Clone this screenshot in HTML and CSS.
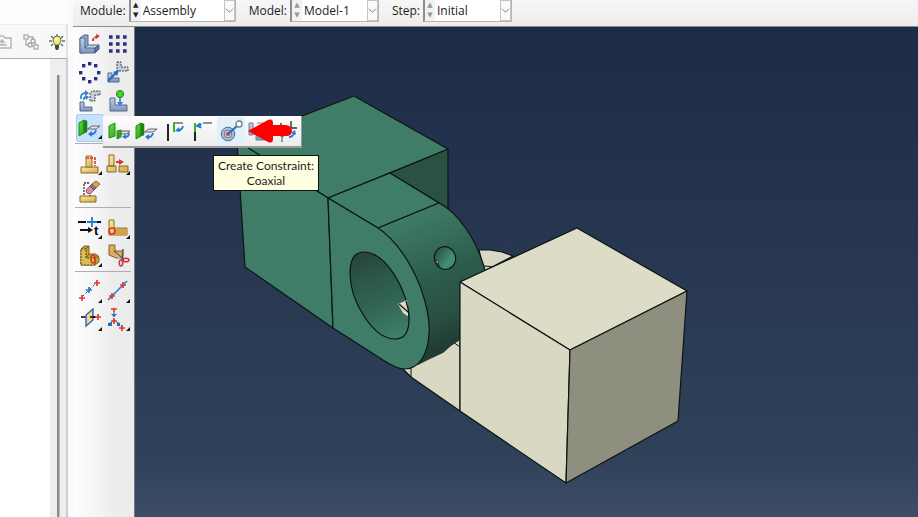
FILE: index.html
```html
<!DOCTYPE html>
<html lang="en">
<head>
<meta charset="utf-8">
<title>Assembly</title>
<link rel="stylesheet" href="styles.css">
</head>
<body>
<svg class="defs" aria-hidden="true">
  <defs>
    <linearGradient id="steel" x1="0" y1="0" x2="0" y2="1"><stop offset="0" stop-color="#c2d0e4"/><stop offset="1" stop-color="#7c96bf"/></linearGradient>
    <linearGradient id="gold" x1="0" y1="0" x2="1" y2="1"><stop offset="0" stop-color="#fbeaa4"/><stop offset="1" stop-color="#d9a940"/></linearGradient>
    <linearGradient id="leaf" x1="0" y1="0" x2="1" y2="1"><stop offset="0" stop-color="#63e03c"/><stop offset="1" stop-color="#259916"/></linearGradient>
    <symbol id="slab" viewBox="0 0 24 24">
      <path d="M8 14L14 10H22L18 13H10" fill="#e4e4e4" stroke="#666"/>
      <path d="M1 7L6 4V17L1 20Z" fill="url(#leaf)" stroke="#238a18"/>
      <path d="M6 4L9 5V16L6 17Z" fill="#1f8116" stroke="#1f8116" stroke-width=".6"/>
      <path d="M18 14Q17 18 14 18" fill="none" stroke="#2277dd" stroke-width="1.8"/><path d="M10 18L14 15V21Z" fill="#2277dd"/>
    </symbol>
  </defs>
</svg>
<div class="app">
  <aside class="side">
    <div class="side-top"></div>
    <div class="side-tools">
      <button aria-label="Up one level"><svg viewBox="0 0 16 16"><path d="M0 2H7L9 4H15V14H0M0 11H11M6 11V7M3 9L6 6L9 9" fill="none" stroke="#b4b4b4" stroke-width="1.4"/></svg></button>
      <button aria-label="Expand tree"><svg viewBox="0 0 16 16"><g fill="none" stroke="#a9a9a9" stroke-width="1.3"><rect x="1" y="1" width="4" height="4"/><path d="M6 3H10V6M3 6V11H6"/><circle cx="10" cy="7" r="2"/><circle cx="7" cy="11" r="2"/><rect x="11" y="11" width="4" height="4"/><path d="M9 12L11 13M12 8L13 11"/></g></svg></button>
      <button aria-label="Tips"><svg viewBox="0 0 16 16"><path d="M8 0V2M2 2L4 4M14 2L12 4M0 7H3M13 7H16M2 12L4 10M14 12L12 10" stroke="#4f7568" stroke-width="1.3"/><path d="M4 6A4 4 0 0 1 12 6Q12 8 10 11H6Q4 8 4 6Z" fill="#f5e878" stroke="#53714b"/><circle cx="7" cy="5" r="1.6" fill="#fffbd0"/><path d="M6 11H10V14L9 16H7L6 14Z" fill="#345348"/></svg></button>
    </div>
    <div class="tree"><div class="track"><div class="thumb"></div></div></div>
  </aside>
  <main class="main">
    <header class="context">
      <label for="module">Module:</label>
      <div class="combo wide">
        <div class="spin"><button aria-label="Previous module">▲</button><button aria-label="Next module">▼</button></div>
        <select id="module"><option>Assembly</option></select>
        <svg class="chev" viewBox="0 0 10 20"><path d="M1 8L5 12L9 8" fill="none" stroke="#777"/></svg>
      </div>
      <label for="model">Model:</label>
      <div class="combo off">
        <div class="spin"><button aria-label="Previous model">▲</button><button aria-label="Next model">▼</button></div>
        <select id="model"><option>Model-1</option></select>
        <svg class="chev" viewBox="0 0 10 20"><path d="M1 8L5 12L9 8" fill="none" stroke="#777"/></svg>
      </div>
      <label for="step">Step:</label>
      <div class="combo off">
        <div class="spin"><button aria-label="Previous step">▲</button><button aria-label="Next step">▼</button></div>
        <select id="step"><option>Initial</option></select>
        <svg class="chev" viewBox="0 0 10 20"><path d="M1 8L5 12L9 8" fill="none" stroke="#777"/></svg>
      </div>
    </header>
    <div class="work">
      <nav class="toolbox" aria-label="Assembly tools">
        <div class="group">
          <button class="tool" aria-label="Create instance"><svg viewBox="0 0 24 24"><path d="M2 6L6 3H10V13L6 21H2Z" fill="#91a9cc" stroke="#52698b"/><path d="M6 17L10 13H21L17 17Z" fill="#c5d3e6" stroke="#52698b"/><path d="M2 6H7V16H17V21H2Z" fill="url(#steel)" stroke="#52698b"/><path d="M17 16L21 13V17L17 21Z" fill="#5676aa" stroke="#435a80"/><path d="M15 9Q15 5 19 5" fill="none" stroke="#dd3328" stroke-width="2" stroke-dasharray="3 1"/><path d="M18 2L22 4L18 7Z" fill="#dd3328"/></svg></button>
          <button class="tool" aria-label="Linear pattern"><svg viewBox="0 0 24 24"><path d="M3 5H21M3 12H21M3 19H21" stroke="#2c2c88" stroke-width="3.4" stroke-dasharray="3.6 3.4"/></svg></button>
          <button class="tool" aria-label="Radial pattern"><svg viewBox="0 0 24 24"><g fill="#2c2c88"><rect x="10" y="2" width="3.4" height="3.4"/><rect x="16" y="4" width="3.4" height="3.4"/><rect x="19" y="11" width="3.4" height="3.4"/><rect x="16" y="17" width="3.4" height="3.4"/><rect x="10" y="20" width="3.4" height="3.4"/><rect x="4" y="17" width="3.4" height="3.4"/><rect x="1" y="11" width="3.4" height="3.4"/><rect x="4" y="4" width="3.4" height="3.4"/></g></svg></button>
          <button class="tool" aria-label="Translate instance"><svg viewBox="0 0 24 24"><path d="M11 2H15V7H22V11H11Z" fill="#c5ccd6" stroke="#444" stroke-dasharray="2 1"/><path d="M2 13H6V18H13V22H2Z" fill="url(#steel)" stroke="#52698b"/><path d="M2 21L10 13" stroke="#176fc0" stroke-width="2"/><path d="M7 12L13 10L11 16Z" fill="#176fc0"/></svg></button>
          <button class="tool" aria-label="Rotate instance"><svg viewBox="0 0 24 24"><path d="M12 13V5L14 3H22V7H17V13Z" fill="#c5ccd6" stroke="#444" stroke-dasharray="2 1"/><path d="M2 14H6V19H14V23H2Z" fill="url(#steel)" stroke="#52698b"/><path d="M3 11Q2 5 8 5M6 12Q5 9 9 9" fill="none" stroke="#2c86cf" stroke-width="1.8"/><path d="M7 2L11 5L7 8ZM8 7L11 9L8 12Z" fill="#2c86cf"/></svg></button>
          <button class="tool" aria-label="Translate to"><svg viewBox="0 0 24 24"><path d="M4 10H9V17H21V23H4Z" fill="url(#steel)" stroke="#52698b"/><path d="M14 9V16" stroke="#2c7bd0" stroke-width="1.6"/><path d="M11 14H17L14 18Z" fill="#2c7bd0"/><circle cx="14" cy="6" r="3.6" fill="#46d12e" stroke="#238a18"/></svg></button>
          <button class="tool more active" aria-label="Create constraint: parallel face"><svg viewBox="0 0 24 24"><use href="#slab"/></svg></button>
        </div>
        <hr>
        <div class="group">
          <button class="tool more" aria-label="Merge instances"><svg viewBox="0 0 24 24"><path d="M3 15H20V21H3Z" fill="url(#gold)" stroke="#806a2d"/><path d="M8 4H14V15H8Z" fill="url(#gold)" stroke="#8a7640"/><path d="M8 6H17V14" fill="none" stroke="#dd3328" stroke-width="1.6" stroke-dasharray="3 1"/></svg></button>
          <button class="tool more" aria-label="Replace instance"><svg viewBox="0 0 24 24"><path d="M3 3H8V14H3ZM1 14H10V20H1ZM13 14H22V20H13Z" fill="url(#gold)" stroke="#806a2d"/><path d="M10 10H14" stroke="#dd3328" stroke-width="2"/><path d="M13 7L18 10L13 13Z" fill="#dd3328"/></svg></button>
          <button class="tool" aria-label="Delete features"><svg viewBox="0 0 24 24"><path d="M2 16H18V22H2Z" fill="url(#gold)" stroke="#806a2d"/><path d="M6 15V3H11M12 12V16" fill="none" stroke="#333" stroke-width="1.3" stroke-dasharray="2 1"/><path d="M8 10L12 6L16 10L12 14Q8 14 8 10Z" fill="#e28a9a" stroke="#8d5c65"/><path d="M12 6L14 4L18 8L16 10Z" fill="#6684ad" stroke="#555"/><path d="M14 4L18 1L22 4L18 8Z" fill="#e4a048" stroke="#8a662e"/></svg></button>
        </div>
        <hr>
        <div class="group">
          <button class="tool more" aria-label="Time point"><svg viewBox="0 0 24 24"><path d="M0 6H8M19 6H23M2 14H11" stroke="#111" stroke-width="1.8"/><path d="M9 6H19M14 1V11" stroke="#2277dd" stroke-width="1.8"/><path d="M10 11L15 14L10 17Z" fill="#111"/><text x="16" y="19" class="glyph">t</text></svg></button>
          <button class="tool more" aria-label="Partition edge"><svg viewBox="0 0 24 24"><path d="M3 4H8V12H21V19H3Z" fill="url(#gold)" stroke="#8a7030"/><path d="M9 13H21V19H9Z" fill="#d99f45"/><circle cx="6" cy="15" r="3" fill="none" stroke="#e0331e" stroke-width="1.6"/></svg></button>
          <button class="tool more" aria-label="Partition cell"><svg viewBox="0 0 24 24"><path d="M3 5L6 2H11V10H18L21 13V18L17 21H3Z" fill="#c59c37" stroke="#7a6528"/><path d="M3 5H8V14H17V21H3Z" fill="#dbbd55" stroke="#57471b" stroke-dasharray="2 1"/><path d="M8 5L11 2M8 14L11 10M17 14L21 12" stroke="#7a6528"/><ellipse cx="15" cy="15" rx="2" ry="4" fill="none" stroke="#e0331e" stroke-width="1.6"/></svg></button>
          <button class="tool" aria-label="Cut geometry"><svg viewBox="0 0 24 24"><path d="M3 1H9V7H17V14H10L3 11Z" fill="#e3ad58" stroke="#7c6330"/><path d="M8 7L18 16M17 5L16 17" stroke="#555" stroke-width="1.4"/><path d="M9 8L16 15L12 14Z" fill="#bbb"/><ellipse cx="15" cy="19" rx="1.7" ry="3" fill="none" stroke="#c93543" stroke-width="1.5"/><ellipse cx="20" cy="16" rx="3" ry="1.8" fill="none" stroke="#c93543" stroke-width="1.5"/></svg></button>
        </div>
        <hr>
        <div class="group">
          <button class="tool more" aria-label="Datum point"><svg viewBox="0 0 24 24"><path d="M4 17L19 2" stroke="#555" stroke-dasharray="3 2"/><path d="M16 3H22M19 0V6M1 18H7M4 15V21" stroke="#df3b30" stroke-width="1.7"/><path d="M8 10H14M11 7V13" stroke="#2277dd" stroke-width="1.7"/></svg></button>
          <button class="tool more" aria-label="Datum axis"><svg viewBox="0 0 24 24"><path d="M2 20L21 1" stroke="#2b85d5" stroke-width="1.7"/><path d="M14 5H20M17 2V8M3 16H9M6 13V19" stroke="#df3b30" stroke-width="1.7"/></svg></button>
          <button class="tool more" aria-label="Datum plane"><svg viewBox="0 0 24 24"><path d="M3 9H18" stroke="#111" stroke-width="1.6"/><path d="M8 7L15 1V12L8 18Z" fill="#efd883" stroke="#3261bd" stroke-width="1.4"/><path d="M12 9H17" stroke="#111" stroke-width="1.6"/><path d="M17 9H23M20 6V12" stroke="#df3b30" stroke-width="1.7"/></svg></button>
          <button class="tool more" aria-label="Datum coordinate system"><svg viewBox="0 0 24 24"><path d="M8 4V11M8 12L4 16M8 12L16 19" stroke="#555" stroke-dasharray="2 1"/><path d="M5 1H11M8 0V4M5 13H11M8 10V16M13 20H19M16 17V23" stroke="#df3b30" stroke-width="1.7"/><path d="M5 6H11L8 9ZM2 15L6 14V18H2ZM11 14L14 15V18H11Z" fill="#1674d0"/></svg></button>
        </div>
        <div class="flyout" role="toolbar" aria-label="Constraints">
          <button class="tool" aria-label="Parallel face"><svg viewBox="0 0 24 24"><path d="M14 12H23L20 15H14" fill="#ddd" stroke="#666"/><path d="M2 7L8 4V17L2 19ZM10 12L14 11V18L10 20Z" fill="url(#leaf)" stroke="#238a18"/><path d="M22 14Q22 18 18 18" fill="none" stroke="#2277dd" stroke-width="1.8"/><path d="M15 18L19 15V20Z" fill="#2277dd"/></svg></button>
          <button class="tool" aria-label="Face to face"><svg viewBox="0 0 24 24"><use href="#slab"/></svg></button>
          <button class="tool" aria-label="Parallel edge"><svg viewBox="0 0 24 24"><path d="M5 5V22" stroke="#222" stroke-width="2"/><path d="M11 13V4" stroke="#38b51e" stroke-width="2"/><path d="M10 4H20" stroke="#777" stroke-width="1.6"/><path d="M20 7Q19 11 16 11" fill="none" stroke="#2277dd" stroke-width="1.8"/><path d="M12 12L16 8L17 13Z" fill="#2277dd"/></svg></button>
          <button class="tool" aria-label="Edge to edge"><svg viewBox="0 0 24 24"><path d="M4 13V22" stroke="#222" stroke-width="2"/><path d="M4 4V13" stroke="#38b51e" stroke-width="2"/><path d="M12 4H21" stroke="#777" stroke-width="1.6"/><path d="M5 7L9 4L10 9ZM9 6L11 5" fill="#2277dd" stroke="#2277dd"/></svg></button>
          <button class="tool hover" aria-label="Coaxial"><svg viewBox="0 0 24 24"><circle cx="9" cy="15" r="6.8" fill="#a9bad5" stroke="#566a8d"/><circle cx="9" cy="15" r="3.8" fill="#c7d0df" stroke="#6d7891"/><circle cx="9" cy="15" r="2" fill="#df3b30"/><path d="M9 15L18 7" stroke="#1773ce" stroke-width="2"/><circle cx="20" cy="5" r="3" fill="#fff" stroke="#777" stroke-width="1.3"/></svg></button>
          <button class="tool" aria-label="Coincident point"><svg viewBox="0 0 24 24"><path d="M2 4H6V16H2ZM6 14H18V21H9V17" fill="url(#steel)" stroke="#74809a"/><path d="M10 4H16" stroke="#888"/></svg></button>
          <button class="tool" aria-label="Parallel coordinate systems"><svg viewBox="0 0 24 24"><path d="M6 4V11M16 2V9H22" fill="none" stroke="#333" stroke-width="1.4"/><path d="M4 15L7 18L11 15M7 18V23" fill="none" stroke="#777" stroke-width="1.4"/><path d="M14 18Q18 18 19 14" fill="none" stroke="#2277dd" stroke-width="1.8"/><path d="M16 14L20 11L21 16Z" fill="#2277dd"/></svg></button>
          <svg class="pointer" viewBox="0 0 44 24" aria-hidden="true"><path d="M0 12L20 1Q25 -1 25 4V6H38Q44 7 44 12Q44 17 38 17H25V20Q25 25 20 23Z" fill="#fe0000"/></svg>
          <div class="tip" role="tooltip">Create Constraint:<br>Coaxial</div>
        </div>
      </nav>
      <section class="viewport" aria-label="Viewport">
        <svg class="scene" viewBox="135 27 783 490" preserveAspectRatio="xMinYMin meet">
          <defs>
            <linearGradient id="rim" gradientUnits="userSpaceOnUse" x1="405" y1="214" x2="457" y2="341"><stop offset="0" stop-color="#3e7d68"/><stop offset=".22" stop-color="#38705d"/><stop offset=".5" stop-color="#2d5c4c"/><stop offset=".8" stop-color="#294f43"/><stop offset="1" stop-color="#203c34"/></linearGradient>
            <linearGradient id="bore" gradientUnits="userSpaceOnUse" x1="364" y1="254" x2="394" y2="338"><stop offset="0" stop-color="#27463c"/><stop offset=".3" stop-color="#2d5849"/><stop offset=".6" stop-color="#316552"/><stop offset="1" stop-color="#3f806a"/></linearGradient>
            <linearGradient id="pin" gradientUnits="userSpaceOnUse" x1="438" y1="248" x2="451" y2="268"><stop offset="0" stop-color="#29503f"/><stop offset=".7" stop-color="#438c74"/><stop offset="1" stop-color="#438c74"/></linearGradient>
          </defs>
          <g stroke="#0c1512" stroke-width="1.2" stroke-linejoin="round">
            <g fill="#d9d8c3">
              <path d="M479 250L490 250L502 252L513 256L484 271Z"/>
              <path d="M484 266L495 267" fill="none"/>
              <path d="M402 368L411 377L460 411V335L430 350Z"/>
              <path d="M411 366V377M453 342L460 347" fill="none" stroke-width="1"/>
            </g>
            <g fill="#3f7d68">
              <path d="M390 173L448 149V209L439 203Z" fill="#2a5143"/>
              <path d="M237 141L354 96L448 149L328 198Z"/>
              <path d="M237 141L328 198L333 328L245 267Z"/>
              <path d="M328 198L390 173L439 203L378 228Z"/>
            </g>
            <path d="M378 228L439 203C458 213 476 238 485 270L460 281V340L451 346L443 353L430 359L418 365L400 300Z" fill="url(#rim)" stroke="none"/>
            <path d="M378 228L439 203C458 213 476 238 485 270" fill="none"/>
            <path d="M328 198L378 228C396 240 411 263 420 286C427 305 430 322 429 334C428 354 419 369 405 369C396 369 388 363 383 360L333 328Z" fill="#3f7d68"/>
            <path d="M350 273C350 259 355 252 364 252C386 252 409 292 409 319C409 332 404 339 395 339C373 339 350 301 350 273Z" fill="url(#bore)"/>
            <path d="M398 304L407 300L409 317L403 313Z" fill="#d9d8c3" stroke="none"/>
            <path d="M399 304L408 312M406 301Q409 310 409 318" fill="none"/>
            <ellipse cx="445" cy="258" rx="10.5" ry="11.5" fill="url(#pin)" transform="rotate(-20 445 258)"/>
            <path d="M435 260L439 266L438 261Z" fill="#d9d8c3" stroke-width=".7"/>
            <path d="M460 282L577 228L687 291L570 350Z" fill="#dddcc6"/>
            <path d="M460 282L570 350L566 483L460 411Z" fill="#d9d8c3"/>
            <path d="M570 350L687 291L678 421L566 483Z" fill="#8e8f7e"/>
          </g>
        </svg>
      </section>
    </div>
  </main>
</div>
</body>
</html>
```
FILE: styles.css
```css
* { box-sizing: border-box; }

body {
  margin: 0;
  font: 12px/15px "Open Sans", "Noto Sans", sans-serif;
  color: #1c1c1c;
  background: #fafafa;
}

button {
  padding: 0;
  border: 0;
  background: none;
  font: inherit;
}

svg { display: block; }

.defs {
  position: absolute;
  width: 0;
  height: 0;
}

.app {
  display: grid;
  grid-template-columns: 68px 1fr;
  column-gap: 5px;
  min-height: 100vh;
}

.side {
  display: flex;
  flex-direction: column;
}

.side-top {
  height: 24px;
  background: #fdfdfd;
}

.side-tools {
  display: flex;
  align-items: center;
  justify-content: space-between;
  height: 34px;
  padding-right: 1px;
  border-top: 1px solid #ececec;
  border-right: 2px solid #e4e4e6;
  background: #f8f8f8;
}

.side-tools svg {
  width: 16px;
  height: 16px;
}

.side-tools button:first-child { margin-left: -4px; }

.tree {
  display: flex;
  flex: 1;
  justify-content: flex-end;
  border-top: 1px solid #aaaab0;
  border-right: 2px solid #cbcbd4;
  background: #fff;
}

.track {
  display: flex;
  justify-content: center;
  width: 16px;
  padding-top: 16px;
  background: #eee;
}

.thumb {
  width: 3px;
  background: #8c8c8c;
  border-right: 1px solid #bbb;
}

.main {
  display: flex;
  flex-direction: column;
  min-width: 0;
}

.context {
  display: flex;
  align-items: flex-start;
  height: 26px;
  padding-left: 7px;
  background: linear-gradient(#f7f7f7, #ededed);
}

.context label {
  padding-top: 3px;
  margin-right: 3px;
}

.combo {
  display: flex;
  width: 89px;
  height: 22px;
  margin-right: 13px;
  border: solid #b5b5b5;
  border-width: 0 1px 1px 2px;
  border-left-color: #8e8e8e;
  background: #fff;
}

.combo.wide { width: 107px; }

.spin {
  display: flex;
  flex-direction: column;
  width: 10px;
  background: #f2f2f2;
}

.spin button {
  height: 10px;
  font: 7px/10px "DejaVu Sans", sans-serif;
  color: #222;
}

.off .spin button { color: #999; }

.combo select {
  flex: 1;
  min-width: 0;
  padding: 0 0 1px 2px;
  border: 0;
  appearance: none;
  background: none;
  font: inherit;
  color: inherit;
}

.chev {
  width: 11px;
  height: 21px;
  border: 1px solid #c4c4c4;
  background: #fafafa;
}

.work {
  display: flex;
  flex: 1;
  border-top: 1px solid #8b8f94;
}

.toolbox {
  position: relative;
  z-index: 1;
  width: 62px;
  padding: 3px 3px 0;
  border-right: 1px solid #76797d;
  background: linear-gradient(90deg, #fefefe, #ececec 70%);
}

.group {
  display: grid;
  grid-template-columns: repeat(2, 28px);
}

.toolbox hr {
  height: 1px;
  margin: 1px 0 6px -1px;
  border: 0;
  background: #aeaeae;
}

.tool {
  position: relative;
  display: grid;
  place-items: center;
  width: 28px;
  height: 28px;
  border-radius: 3px;
}

.tool svg {
  width: 24px;
  height: 24px;
}

.tool.active {
  background: #c7e3fb;
  box-shadow: inset 0 0 0 1px #a5cdef;
}

.tool.hover { background: #e2f0fb; }

.more::after {
  content: "";
  position: absolute;
  right: 2px;
  bottom: 3px;
  border: 2px solid #111;
  border-top-color: transparent;
  border-left-color: transparent;
}

.glyph { font: bold 13px "Liberation Sans", sans-serif; }

.flyout {
  position: absolute;
  top: 89px;
  left: 30px;
  display: flex;
  padding: 1px 0 1px 2px;
  border-right: 1px solid #999;
  border-bottom: 2px solid #999;
  background: linear-gradient(#fdfdfd, #ececec);
}

.pointer {
  position: absolute;
  top: 3px;
  left: 145px;
  width: 44px;
  height: 24px;
}

.tip {
  position: absolute;
  top: 39px;
  left: 110px;
  padding: 2px 4px;
  border: 1px solid #111;
  background: #ffffe1;
  font-family: Lato, sans-serif;
  text-align: center;
  white-space: nowrap;
}

.viewport {
  flex: 1;
  min-width: 0;
  background: linear-gradient(#1d2c46, #30415a 88%, #3d4d68);
}

.scene {
  width: 100%;
  height: auto;
}
```
